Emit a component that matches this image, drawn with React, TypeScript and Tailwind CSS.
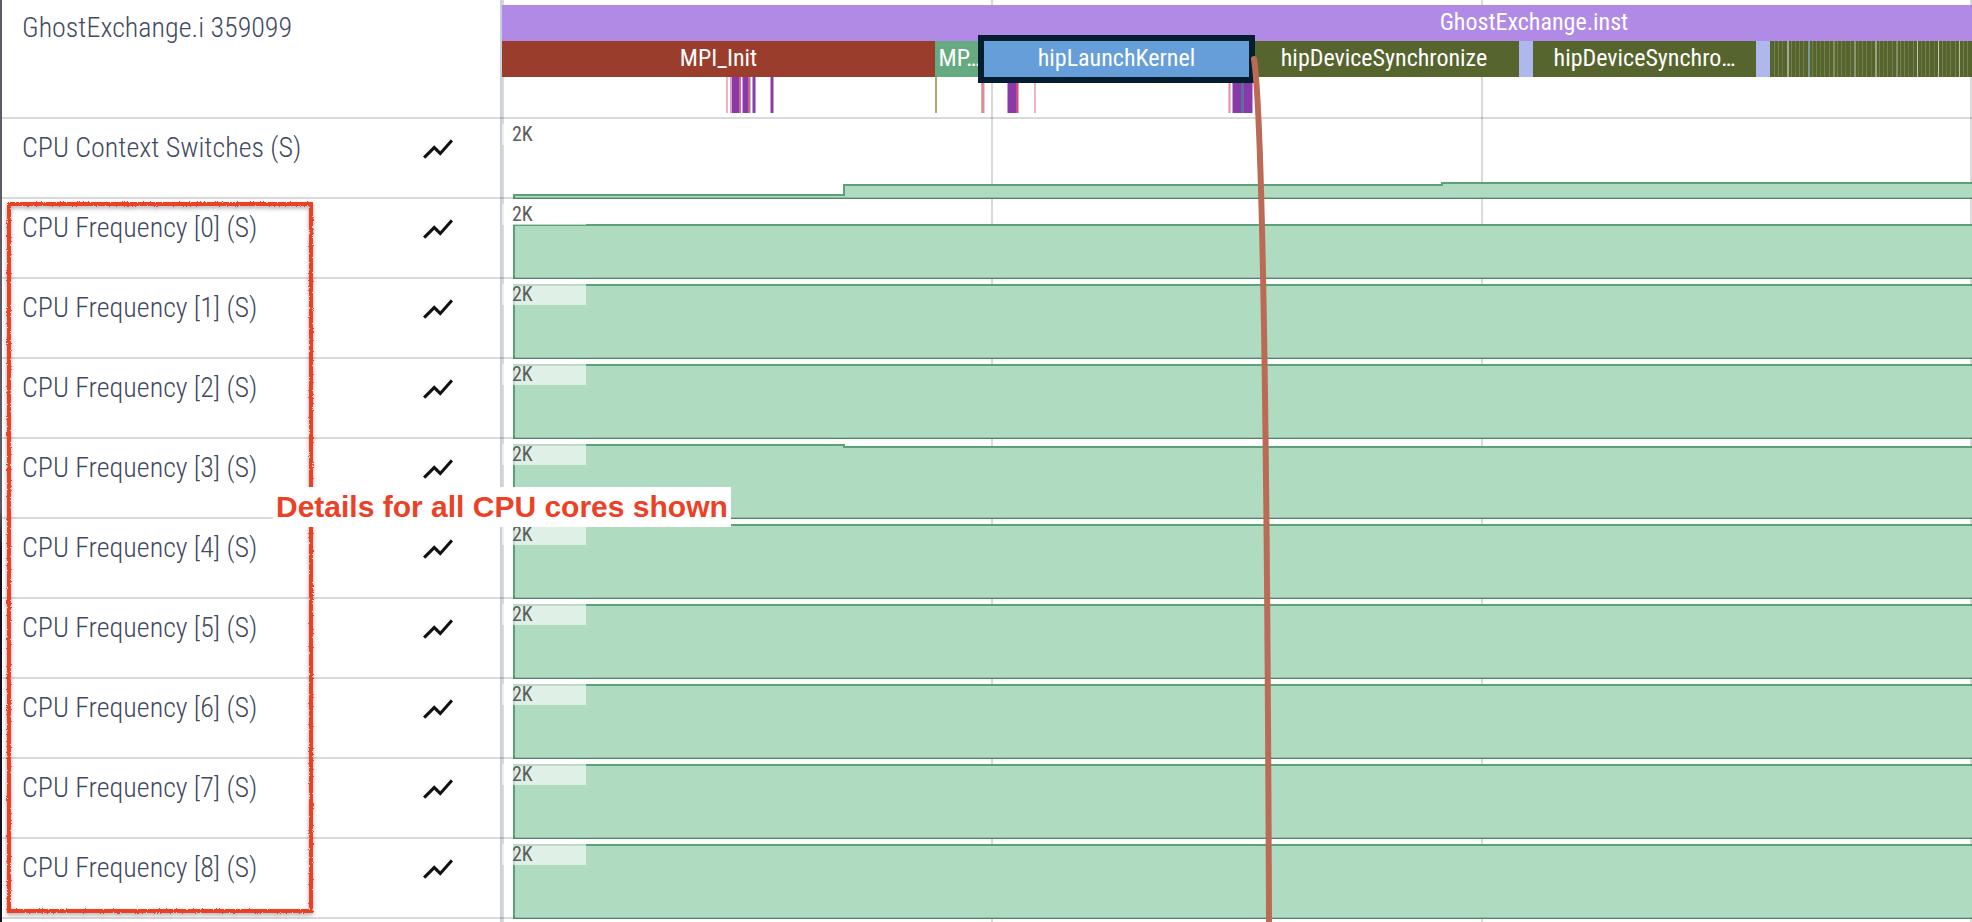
import { MdShowChart } from "react-icons/md";

type Mark = { x: number; w: number; color: string };
type Level = { x: number; y: number };
type Counter = { name: string; levels: Level[] };

const TRACK_WIDTH = 1470;
const ROW_HEIGHT = 80;

const full: Level[] = [{ x: 12, y: 6 }];

const counters: Counter[] = [
  {
    name: "CPU Context Switches (S)",
    levels: [
      { x: 12, y: 76 },
      { x: 342, y: 66 },
      { x: 940, y: 64 },
    ],
  },
  { name: "CPU Frequency [0] (S)", levels: [{ x: 12, y: 26 }] },
  { name: "CPU Frequency [1] (S)", levels: full },
  { name: "CPU Frequency [2] (S)", levels: full },
  {
    name: "CPU Frequency [3] (S)",
    levels: [
      { x: 12, y: 6 },
      { x: 342, y: 8 },
    ],
  },
  { name: "CPU Frequency [4] (S)", levels: full },
  { name: "CPU Frequency [5] (S)", levels: full },
  { name: "CPU Frequency [6] (S)", levels: full },
  { name: "CPU Frequency [7] (S)", levels: full },
  { name: "CPU Frequency [8] (S)", levels: full },
];

const nestedMarks: Mark[] = [
  { x: 224, w: 2, color: "#f0b0c5" },
  { x: 228, w: 2, color: "#dca0c4" },
  { x: 230, w: 7, color: "#8a39ab" },
  { x: 237, w: 2, color: "#cf6b8e" },
  { x: 240, w: 1, color: "#c59cd5" },
  { x: 241, w: 5, color: "#8a39ab" },
  { x: 246, w: 2, color: "#c5688c" },
  { x: 248, w: 1, color: "#a9cfd0" },
  { x: 250, w: 1, color: "#c59cd5" },
  { x: 251, w: 2, color: "#8a39ab" },
  { x: 253, w: 1, color: "#c59cd5" },
  { x: 268, w: 1, color: "#c59cd5" },
  { x: 269, w: 2, color: "#8a39ab" },
  { x: 271, w: 1, color: "#c59cd5" },
  { x: 433, w: 2, color: "#b0a972" },
  { x: 479, w: 1, color: "#c5b29b" },
  { x: 480, w: 2, color: "#e288a0" },
  { x: 482, w: 1, color: "#f3c6d4" },
  { x: 505, w: 1, color: "#c59cd5" },
  { x: 506, w: 8, color: "#8a39ab" },
  { x: 514, w: 2, color: "#c94f80" },
  { x: 516, w: 1, color: "#e8a0b5" },
  { x: 532, w: 2, color: "#f0b0c5" },
  { x: 726, w: 1, color: "#f3c6d4" },
  { x: 727, w: 1, color: "#e08aa5" },
  { x: 728, w: 1, color: "#f3c6d4" },
  { x: 730, w: 1, color: "#c59cd5" },
  { x: 731, w: 8, color: "#8a39ab" },
  { x: 739, w: 3, color: "#5c6f9b" },
  { x: 742, w: 8, color: "#8a39ab" },
  { x: 750, w: 1, color: "#c59cd5" },
];

const stripes: Mark[] = Array.from({ length: 47 }, (_, i) => ({
  x: Math.round(4 + i * 4.2),
  w: 1,
  color: i % 3 === 2 ? "#6b773f" : "#75804f",
}));

const brightStripes: Mark[] = [
  { x: 17, w: 2, color: "#a0a992" },
  { x: 38, w: 2, color: "#7d9a94" },
  { x: 63, w: 2, color: "#838c60" },
  { x: 84, w: 2, color: "#8b946d" },
  { x: 105, w: 2, color: "#9aa385" },
  { x: 126, w: 2, color: "#848d63" },
  { x: 147, w: 1, color: "#c2c8ab" },
  { x: 168, w: 1, color: "#c5cbb0" },
  { x: 189, w: 1, color: "#b9c0a0" },
];

function Marks({ marks }: { marks: Mark[] }) {
  return (
    <>
      {marks.map((m) => (
        <rect key={`${m.x}-${m.color}`} x={m.x} y={0} width={m.w} height={36} fill={m.color} />
      ))}
    </>
  );
}

function CounterChart({ levels }: { levels: Level[] }) {
  const line = levels
    .map((l, i) => (i === 0 ? `M${l.x} ${ROW_HEIGHT}V${l.y}` : `H${l.x}V${l.y}`))
    .join("");
  return (
    <svg
      className="block h-full w-full"
      viewBox={`0 0 ${TRACK_WIDTH} ${ROW_HEIGHT}`}
      preserveAspectRatio="none"
      aria-hidden="true"
    >
      <path
        d={`${line}H${TRACK_WIDTH + 4}V${ROW_HEIGHT}Z`}
        fill="#afdbc0"
        stroke="#5ba278"
        strokeWidth={2}
      />
    </svg>
  );
}

function CounterRow({ name, levels }: Counter) {
  return (
    <div className="relative flex h-20">
      <div className="flex w-[500px] shrink-0 items-start justify-between border-r-2 border-[#c9d0dd] pt-3 pr-11 pl-5">
        <h2 className="pt-px text-[28px] leading-8 font-light text-[#3f4a5f]">{name}</h2>
        <button type="button" aria-label={`Chart options for ${name}`} className="text-[#111]">
          <MdShowChart size={36} />
        </button>
      </div>
      <div className="relative min-w-0 flex-1">
        <CounterChart levels={levels} />
        <span className="absolute top-[5px] left-0 h-[21px] w-[84px] bg-white/60 pl-2.5 text-[20px] leading-[21px] text-[#5c5c5c]">
          2K
        </span>
      </div>
      <div className="absolute inset-x-0 bottom-0 h-0.5 bg-black/15" />
    </div>
  );
}

function ProcessRow() {
  return (
    <div className="relative flex h-[119px]">
      <div className="w-[500px] shrink-0 border-r-2 border-[#c9d0dd] pt-3 pl-5">
        <h2 className="text-[28px] leading-8 font-light text-[#3f4a5f]">GhostExchange.i 359099</h2>
      </div>
      <div className="min-w-0 flex-1 overflow-hidden pt-[5px] text-center text-[24px] leading-9 text-white">
        <div className="h-9 w-[140.4%] bg-[#b08ae4]">
          <span className="block leading-[34px]">GhostExchange.inst</span>
        </div>
        <div className="flex h-9 leading-[34px] whitespace-nowrap">
          <div className="min-w-0 flex-[433] bg-[#9a3d2d]">MPI_Init</div>
          <div className="min-w-0 flex-[49] bg-[#66aa82]">MP…</div>
          <div className="relative min-w-0 flex-[265] bg-[#659ed8] outline-[6px] outline-[#041e2f]">
            hipLaunchKernel
          </div>
          <div className="min-w-0 flex-[270] bg-[#56642e]">hipDeviceSynchronize</div>
          <div className="min-w-0 flex-[14] bg-[#aeb8ec]" />
          <div className="min-w-0 flex-[223] bg-[#56642e]">hipDeviceSynchro…</div>
          <div className="min-w-0 flex-[14] bg-[#aeb8ec]" />
          <div className="min-w-0 flex-[202] bg-[#56642e]">
            <svg className="block h-9 w-full" viewBox="0 0 202 36" preserveAspectRatio="none" aria-hidden="true">
              <Marks marks={stripes} />
              <Marks marks={brightStripes} />
            </svg>
          </div>
        </div>
        <svg
          className="block h-9 w-full"
          viewBox={`0 0 ${TRACK_WIDTH} 36`}
          preserveAspectRatio="none"
          aria-hidden="true"
        >
          <Marks marks={nestedMarks} />
        </svg>
      </div>
      <div className="absolute inset-x-0 bottom-0 h-0.5 bg-black/15" />
    </div>
  );
}

export default function App() {
  return (
    <div className="flex min-h-screen bg-white font-['Roboto_Condensed',Roboto,sans-serif]">
      <div className="w-0.5 shrink-0 bg-linear-to-b from-[#5a5c66] from-55% to-[#10131f] to-60%" />
      <main className="relative min-w-0 flex-1 overflow-hidden">
        <div className="absolute inset-y-0 right-0 left-[498px] flex border-l-2 border-[#c9d0dd]">
          <div className="grid flex-1 grid-cols-3 border-r-2 border-[#d9d9d9]">
            <div className="border-l-2 border-[#d9d9d9]" />
            <div className="border-l-2 border-[#d9d9d9]" />
            <div className="border-l-2 border-[#d9d9d9]" />
          </div>
        </div>

        <div className="relative">
          <ProcessRow />
          {counters.map((c) => (
            <CounterRow key={c.name} {...c} />
          ))}
        </div>

        <div className="pointer-events-none absolute inset-y-0 right-0 left-[500px]">
          <svg className="block h-full w-full" viewBox="0 0 1470 922" preserveAspectRatio="none" aria-hidden="true">
            <path
              d="M752 59C760 110 765 400 767 922"
              fill="none"
              stroke="#bb6a55"
              strokeWidth={6}
              strokeLinecap="round"
            />
          </svg>
        </div>

        <svg
          className="pointer-events-none absolute top-[196px] left-0 h-[724px] w-[320px]"
          viewBox="0 0 320 724"
          aria-hidden="true"
        >
          <defs>
            <filter id="chalk" x="-5%" y="-5%" width="110%" height="110%">
              <feTurbulence type="fractalNoise" baseFrequency="0.7" numOctaves={2} seed={4} result="noise" />
              <feDisplacementMap in="SourceGraphic" in2="noise" scale={3} result="rough" />
              <feDropShadow in="rough" dx={0} dy={2} stdDeviation={2} floodColor="#000" floodOpacity={0.35} />
            </filter>
          </defs>
          <rect x={7} y={8} width={302} height={707} fill="none" stroke="#ea4127" strokeWidth={4} filter="url(#chalk)" />
        </svg>

        <p className="absolute top-[487px] left-[271px] bg-white px-[3px] font-['Liberation_Sans',Arial,sans-serif] text-[30px] leading-10 font-bold whitespace-nowrap text-[#ea4127]">
          Details for all CPU cores shown
        </p>
      </main>
    </div>
  );
}
